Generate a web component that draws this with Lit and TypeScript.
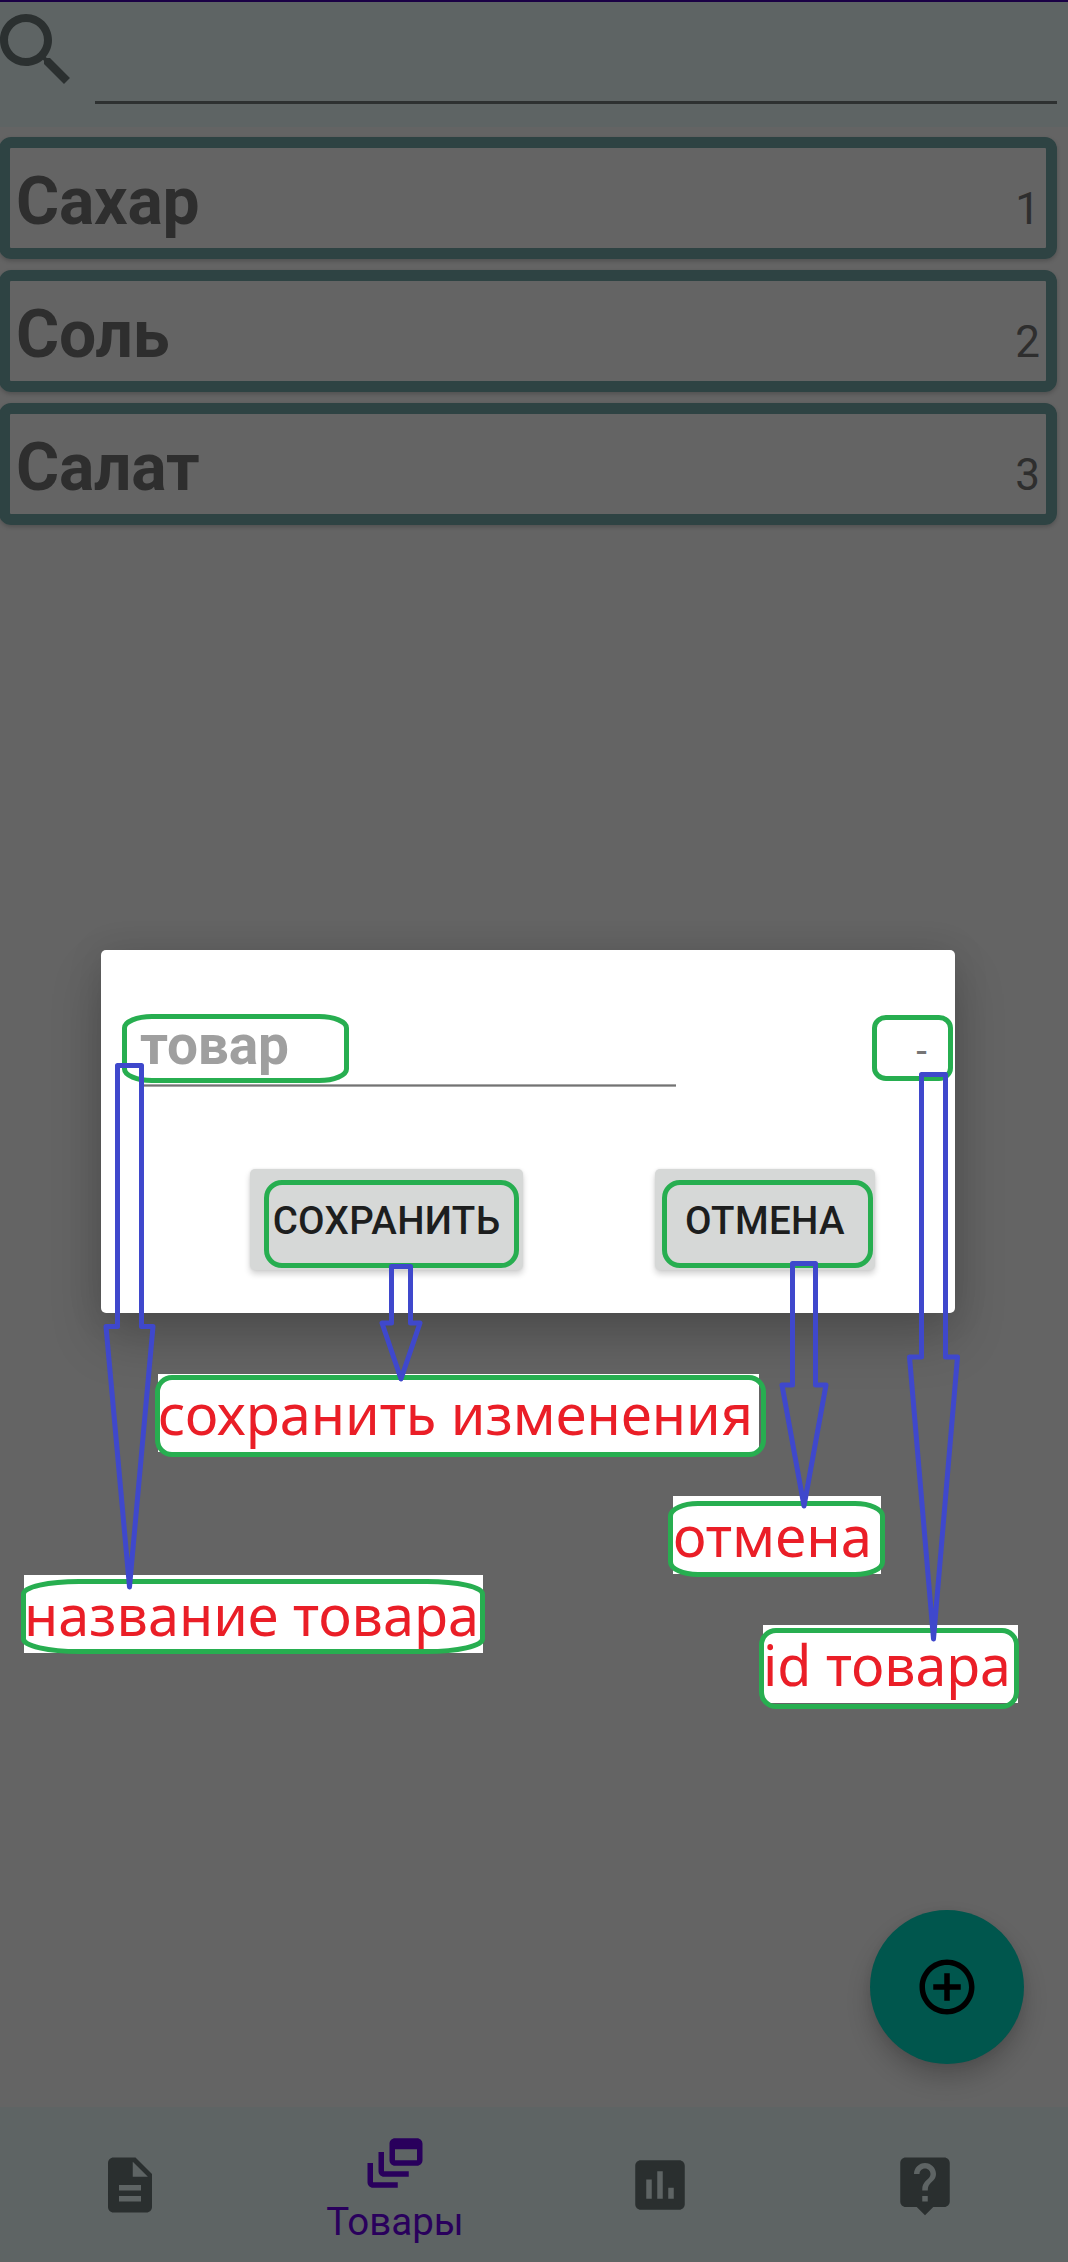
import { LitElement, html, svg, css } from "lit";
import { customElement, property } from "lit/decorators.js";

const ICONS = {
  search:
    "M15.5 14h-.79l-.28-.27C15.41 12.59 16 11.11 16 9.5 16 5.91 13.09 3 9.5 3S3 5.91 3 9.5 5.91 16 9.5 16c1.61 0 3.09-.59 4.23-1.57l.27.28v.79l5 4.99L20.49 19l-4.99-5zm-6 0C7.01 14 5 11.99 5 9.5S7.01 5 9.5 5 14 7.01 14 9.5 11.99 14 9.5 14z",
  add: "M13 7h-2v4H7v2h4v4h2v-4h4v-2h-4V7zm-1-5C6.48 2 2 6.48 2 12s4.48 10 10 10 10-4.48 10-10S17.52 2 12 2zm0 18c-4.41 0-8-3.59-8-8s3.59-8 8-8 8 3.59 8 8-3.59 8-8 8z",
  document:
    "M14 2H6c-1.1 0-1.99.9-1.99 2L4 20c0 1.1.89 2 1.99 2H18c1.1 0 2-.9 2-2V8l-6-6zm2 16H8v-2h8v2zm0-4H8v-2h8v2zm-3-5V3.5L18.5 9H13z",
  feed: "M8 8H6v7c0 1.1.9 2 2 2h9v-2H8V8zM20 3h-8c-1.1 0-2 .9-2 2v6c0 1.1.9 2 2 2h8c1.1 0 2-.9 2-2V5c0-1.1-.9-2-2-2zm0 8h-8V7h8v4zM4 12H2v7c0 1.1.9 2 2 2h9v-2H4v-7z",
  chart:
    "M19 3H5c-1.1 0-2 .9-2 2v14c0 1.1.9 2 2 2h14c1.1 0 2-.9 2-2V5c0-1.1-.9-2-2-2zM9 17H7v-7h2v7zm4 0h-2V7h2v10zm4 0h-2v-4h2v4z",
  help: "M19 2H5c-1.11 0-2 .9-2 2v14c0 1.1.89 2 2 2h4l3 3 3-3h4c1.1 0 2-.9 2-2V4c0-1.1-.9-2-2-2zm-6 16h-2v-2h2v2zm2.07-7.75l-.9.92C13.45 11.9 13 12.5 13 14h-2v-.5c0-1.1.45-2.1 1.17-2.83l1.24-1.26c.37-.36.59-.86.59-1.41 0-1.1-.9-2-2-2s-2 .9-2 2H8c0-2.21 1.79-4 4-4s4 1.79 4 4c0 .88-.36 1.68-.93 2.25z",
};

@customElement("md-icon")
class MdIcon extends LitElement {
  @property() name: keyof typeof ICONS = "search";
  @property() box = "0 0 24 24";
  static styles = css`
    :host { display: block; width: 66px; height: 66px; flex: none; }
    svg { display: block; width: 100%; height: 100%; fill: currentColor; }
  `;
  render() {
    return html`<svg viewBox=${this.box}><path d=${ICONS[this.name]}></path></svg>`;
  }
}

@customElement("product-card")
class ProductCard extends LitElement {
  @property() name = "";
  @property() number = "";
  static styles = css`
    :host { display: block; }
    .card {
      display: flex; align-items: baseline; justify-content: space-between;
      box-sizing: border-box; height: 122px; padding: 15px 6px 0 6px;
      border: 11px solid #2e4343; border-radius: 12px;
      box-shadow: 0 2px 4px rgba(0, 0, 0, 0.2);
    }
    .name { font-size: 66px; line-height: 78px; font-weight: 700; color: #2e2e2e; letter-spacing: -0.2px; }
    .number { font-size: 44px; color: #2e2e2e; }
  `;
  render() {
    return html`<div class="card">
      <span class="name">${this.name}</span><span class="number">${this.number}</span>
    </div>`;
  }
}

@customElement("product-dialog")
class ProductDialog extends LitElement {
  static styles = css`
    :host {
      display: block; box-sizing: border-box; width: 854px; height: 363px;
      background: #fff; border-radius: 5px; padding-top: 63px;
      box-shadow: 0 26px 52px rgba(0, 0, 0, 0.2), 0 2px 36px rgba(0, 0, 0, 0.1);
    }
    .row { display: flex; align-items: baseline; justify-content: space-between; padding: 0 28px 0 39px; }
    .field {
      width: 536px; height: 75px; font-size: 55px; line-height: 64px; font-weight: 700; color: #9f9f9f;
      letter-spacing: -0.2px;
      background: linear-gradient(#a5a5a5 0 1px, #737373 1px 2px, #a5a5a5 2px 3px) 0 71px / 100% 3px no-repeat;
    }
    .id { font-size: 38.5px; color: #757575; }
    .actions { display: flex; gap: 132px; padding: 81px 0 0 149px; }
    .button {
      box-sizing: border-box; height: 101px; padding-top: 3px; text-align: center;
      font-size: 38.5px; line-height: 98px; font-weight: 500; color: #1d1e1e; white-space: nowrap;
      letter-spacing: 0.35px;
      background: #d6d8d7; border-radius: 5px; box-shadow: 0 4px 6px rgba(0, 0, 0, 0.18), 0 0 3px rgba(0, 0, 0, 0.08);
    }
    .save { width: 273px; }
    .cancel { width: 220px; }
  `;
  render() {
    return html`
      <div class="row"><div class="field">товар</div><span class="id">-</span></div>
      <div class="actions">
        <div class="button save">СОХРАНИТЬ</div>
        <div class="button cancel">ОТМЕНА</div>
      </div>`;
  }
}

interface Frame { x: number; y: number; r: number; b: number; rx: number; ry: number }
interface Note { text: string; x: number; w: number; base: number; bg: [number, number, number, number] }
interface Arrow { l: number; r: number; top: number; neck: number; hl: number; hr: number; tx: number; ty: number }

const NOTES: Note[] = [
  { text: "сохранить изменения", x: 158, w: 595, base: 1435, bg: [158, 1374, 601, 78] },
  { text: "название товара", x: 24, w: 455, base: 1636, bg: [24, 1575, 459, 78] },
  { text: "отмена", x: 673, w: 199, base: 1557, bg: [673, 1496, 208, 78] },
  { text: "id товара", x: 763, w: 248, base: 1686, bg: [763, 1625, 255, 78] },
];

/* Outer bounds of each outline. */
const FRAMES: Frame[] = [
  { x: 122, y: 1014, r: 349, b: 1083, rx: 30, ry: 14 },
  { x: 872, y: 1015, r: 953, b: 1081, rx: 14, ry: 13 },
  { x: 264, y: 1180, r: 519, b: 1268, rx: 18, ry: 18 },
  { x: 662, y: 1180, r: 873, b: 1268, rx: 18, ry: 18 },
  { x: 155, y: 1375, r: 766, b: 1457, rx: 17, ry: 17 },
  { x: 21, y: 1579, r: 485, b: 1654, rx: 58, ry: 15 },
  { x: 668, y: 1501, r: 885, b: 1577, rx: 30, ry: 15 },
  { x: 759, y: 1628, r: 1019, b: 1709, rx: 17, ry: 17 },
];

const ARROWS: Arrow[] = [
  { l: 117.5, r: 141.5, top: 1065.5, neck: 1326.5, hl: 106, hr: 153, tx: 129.5, ty: 1587 },
  { l: 391.5, r: 410.5, top: 1266.5, neck: 1323, hl: 382, hr: 420, tx: 401, ty: 1379 },
  { l: 792.5, r: 815.5, top: 1263.5, neck: 1385, hl: 782, hr: 826, tx: 804, ty: 1506 },
  { l: 921.5, r: 945.5, top: 1074.5, neck: 1357, hl: 909.5, hr: 957.5, tx: 933.5, ty: 1639 },
];

@customElement("callout-layer")
class CalloutLayer extends LitElement {
  static styles = css`
    :host { display: block; }
    svg { display: block; }
    .paper { fill: #fff; }
    .note { font: 400 56px "Noto Sans", "Open Sans", sans-serif; fill: #ea1e27; }
    .frame { fill: none; stroke: #27ae50; stroke-width: 5; }
    .arrow { fill: none; stroke: #3f48cc; stroke-width: 5; stroke-linejoin: round; }
  `;
  render() {
    return html`<svg width="1068" height="2262" viewBox="0 0 1068 2262">
      ${NOTES.map(
        (n) => svg`<rect class="paper" x=${n.bg[0]} y=${n.bg[1]} width=${n.bg[2]} height=${n.bg[3]}></rect>
          <text class="note" x=${n.x} y=${n.base} textLength=${n.w} lengthAdjust="spacingAndGlyphs">${n.text}</text>`
      )}
      ${FRAMES.map(
        (f) => svg`<rect class="frame" x=${f.x + 2.5} y=${f.y + 2.5} width=${f.r - f.x - 5} height=${f.b - f.y - 5}
          rx=${f.rx - 2.5} ry=${f.ry - 2.5}></rect>`
      )}
      ${ARROWS.map(
        (a) => svg`<path class="arrow" d=${`M${a.l} ${a.top}H${a.r}V${a.neck}H${a.hr}L${a.tx} ${a.ty}L${a.hl} ${a.neck}H${a.l}Z`}></path>`
      )}
    </svg>`;
  }
}

@customElement("app-root")
class AppRoot extends LitElement {
  static styles = css`
    :host {
      display: flex; flex-direction: column; position: relative; overflow: hidden;
      width: 1068px; height: 2262px; background: #646464; font-family: Roboto, sans-serif;
    }
    .status { height: 2px; background: #1a0045; }
    .search { display: flex; gap: 23px; height: 124.5px; background: #5e6464; flex: none; }
    .search md-icon { width: 72px; height: 72px; margin-top: 12px; color: #2b3030; }
    .query { width: 962px; height: 102px; box-sizing: border-box; border-bottom: 3px solid #2e3131; }
    .list { flex: 1; display: flex; flex-direction: column; gap: 11px; padding: 10.5px 11px 0 0; margin-left: -1px; }
    .nav { display: flex; height: 155px; background: #5e6464; color: #2a2f2f; margin-left: -2.5px; flex: none;
      padding-right: 10.5px; }
    .tab { width: 265px; display: flex; flex-direction: column; align-items: center; padding-top: 45px; box-sizing: border-box; }
    .tab.active { padding-top: 23px; color: #29005c; }
    .label { font-size: 38.5px; line-height: 46px; margin-top: 3px; }
    .fab {
      position: absolute; left: 870px; top: 1910px; width: 154px; height: 154px; border-radius: 50%;
      display: flex; align-items: center; justify-content: center; background: #00564d; color: #000;
      box-shadow: 0 14px 24px rgba(0, 0, 0, 0.2), 0 2px 10px rgba(0, 0, 0, 0.06);
    }
    product-dialog { position: absolute; left: 101px; top: 950px; }
    callout-layer { position: absolute; left: 0; top: 0; }
  `;
  render() {
    return html`
      <div class="status"></div>
      <div class="search"><md-icon name="search" box="3 3 18 18"></md-icon><div class="query"></div></div>
      <div class="list">
        <product-card name="Сахар" number="1"></product-card>
        <product-card name="Соль" number="2"></product-card>
        <product-card name="Салат" number="3"></product-card>
      </div>
      <div class="nav">
        <div class="tab"><md-icon name="document"></md-icon></div>
        <div class="tab active"><md-icon name="feed"></md-icon><span class="label">Товары</span></div>
        <div class="tab"><md-icon name="chart"></md-icon></div>
        <div class="tab"><md-icon name="help"></md-icon></div>
      </div>
      <div class="fab"><md-icon name="add"></md-icon></div>
      <product-dialog></product-dialog>
      <callout-layer></callout-layer>
    `;
  }
}
